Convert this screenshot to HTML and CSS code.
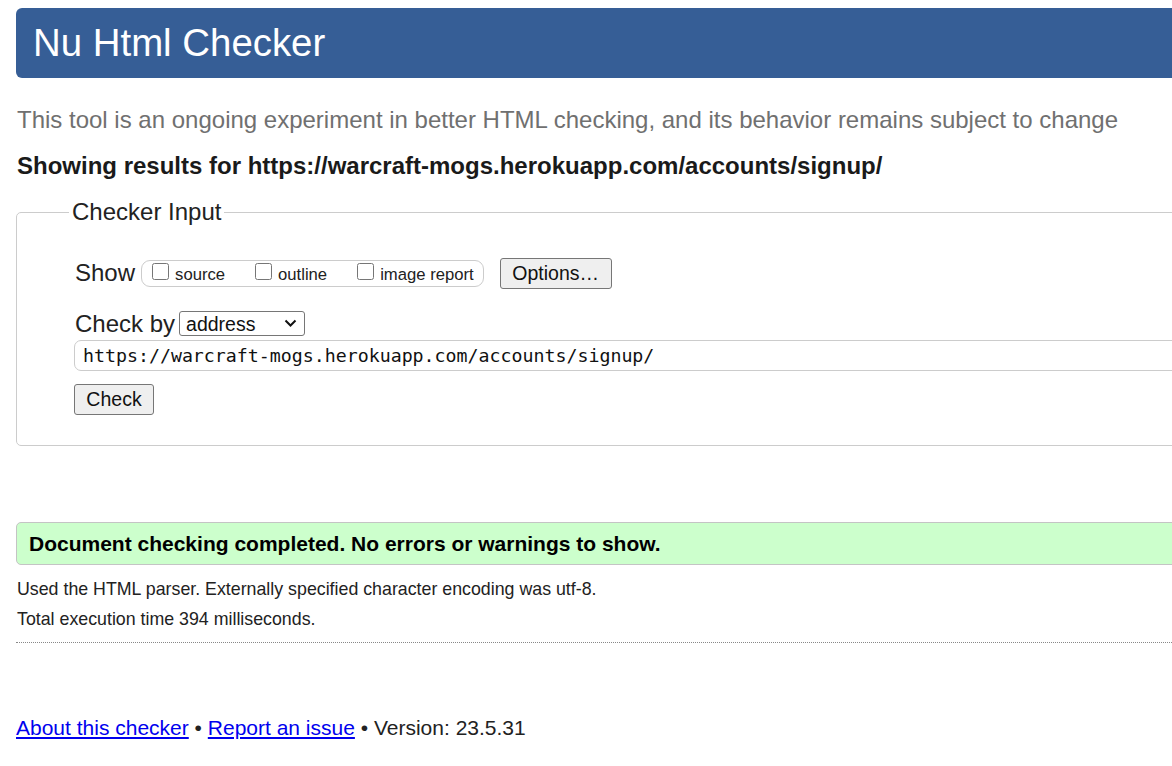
FILE: index.html
```html
<!DOCTYPE html>
<html lang="en">
<head>
<meta charset="utf-8">
<title>Nu Html Checker</title>
<link rel="stylesheet" href="styles.css">
</head>
<body>
<div class="page">
  <header class="banner"><h1>Nu Html Checker</h1></header>
  <p class="tagline">This tool is an ongoing experiment in better HTML checking, and its behavior remains subject to change</p>
  <p class="showing">Showing results for https://warcraft-mogs.herokuapp.com/accounts/signup/</p>
  <form class="checker-form">
    <fieldset class="input-box">
      <legend>Checker Input</legend>
      <div class="row show-row">
        <span class="lbl">Show</span>
        <span class="pill">
          <label class="opt"><input type="checkbox">source</label>
          <label class="opt"><input type="checkbox">outline</label>
          <label class="opt"><input type="checkbox">image report</label>
        </span>
        <button type="button" class="btn options">Options…</button>
      </div>
      <div class="row checkby-row">
        <span class="lbl">Check by</span>
        <span class="select-wrap">
          <select class="sel"><option>address</option></select>
          <svg class="chev" width="13" height="8" viewBox="0 0 13 8"><polyline points="1.5,1.5 6.5,6.5 11.5,1.5" fill="none" stroke="#111" stroke-width="2"/></svg>
        </span>
      </div>
      <input class="url" type="text" value="https://warcraft-mogs.herokuapp.com/accounts/signup/">
      <button type="button" class="btn check">Check</button>
    </fieldset>
  </form>
  <div class="success"><p>Document checking completed. No errors or warnings to show.</p></div>
  <p class="details first">Used the HTML parser. Externally specified character encoding was utf-8.</p>
  <p class="details">Total execution time 394 milliseconds.</p>
  <hr class="dotted">
  <p class="footer"><a href="#">About this checker</a> • <a href="#">Report an issue</a> • Version: 23.5.31</p>
</div>
</body>
</html>
```
FILE: styles.css
```css
html { overflow: hidden; }
body {
  margin: 0;
  font-family: "Liberation Sans", Arial, sans-serif;
  color: #222;
  background: #fff;
}
.page {
  width: 1400px;
  padding: 8px 0 0 16px;
}
.banner {
  background: #365e96;
  border-radius: 6px;
  height: 70px;
  padding-left: 17px;
}
.banner h1 {
  margin: 0;
  font-weight: normal;
  font-size: 38.4px;
  line-height: 70px;
  color: #fff;
}
.tagline {
  margin: 28px 0 0 1px;
  font-size: 24px;
  line-height: 28px;
  color: #707070;
}
.showing {
  margin: 18px 0 0 1px;
  font-size: 24px;
  line-height: 28px;
  font-weight: bold;
  color: #1a1a1a;
}
.checker-form { margin: 18px 0 0 0; }
.input-box {
  margin: 0;
  border: 1px solid #ccc;
  border-radius: 5px;
  padding: 0 0 30px 57px;
  min-width: 0;
}
.input-box legend {
  margin-left: -5px;
  padding: 0 3px;
  font-size: 24px;
  line-height: 28px;
  color: #222;
}
.row {
  display: flex;
  align-items: center;
}
.show-row {
  height: 32px;
  margin-top: 31px;
}
.lbl {
  font-size: 24px;
  color: #222;
  margin-left: 1px;
}
.pill {
  box-sizing: border-box;
  margin-left: 6px;
  height: 27px;
  border: 1px solid #ccc;
  border-radius: 9px;
  padding: 0 9px 0 10px;
  display: flex;
  align-items: center;
  gap: 30px;
}
.opt {
  display: inline-flex;
  align-items: baseline;
  font-size: 16.67px;
  color: #222;
  position: relative;
  top: 1px;
}
.opt input {
  width: 17px;
  height: 17px;
  margin: 0 6px 0 0;
}
.btn {
  box-sizing: border-box;
  height: 31px;
  background: #efefef;
  border: 1px solid #767676;
  border-radius: 3px;
  font-family: "Liberation Sans", Arial, sans-serif;
  font-size: 19.5px;
  color: #111;
  padding: 0;
}
.options {
  margin-left: 16px;
  width: 112px;
}
.checkby-row {
  height: 25px;
  margin-top: 22px;
}
.select-wrap {
  position: relative;
  margin-left: 4px;
  display: inline-block;
  height: 25px;
}
.sel {
  box-sizing: border-box;
  appearance: none;
  -webkit-appearance: none;
  width: 126px;
  height: 25px;
  border: 1px solid #767676;
  border-radius: 3px;
  background: #fff;
  font-family: "Liberation Sans", Arial, sans-serif;
  font-size: 19.5px;
  color: #111;
  padding: 0 0 0 6px;
  margin: 0;
}
.chev {
  position: absolute;
  right: 8px;
  top: 8px;
  pointer-events: none;
}
.url {
  display: block;
  box-sizing: border-box;
  margin: 4px 0 0 0;
  width: 1300px;
  height: 31px;
  border: 1px solid #ccc;
  border-radius: 7px;
  padding: 0 8px;
  font-family: "DejaVu Sans Mono", "Liberation Mono", monospace;
  font-size: 18.25px;
  color: #111;
}
.check {
  display: block;
  margin-top: 13px;
  width: 80px;
}
.success {
  box-sizing: border-box;
  margin-top: 76px;
  height: 43px;
  border: 1px solid #c4c4c4;
  border-radius: 5px;
  background: #ccffcc;
  padding-left: 12px;
}
.success p {
  margin: 0;
  font-size: 21px;
  line-height: 42px;
  font-weight: bold;
  color: #000;
}
.details {
  margin: 10px 0 0 1px;
  font-size: 17.8px;
  line-height: 20px;
  color: #222;
}
.details.first { margin-top: 14px; }
.dotted {
  margin: 13px 0 0 0;
  border: 0;
  border-top: 1px dotted #888;
  height: 0;
}
.footer {
  margin: 73px 0 0 0;
  font-size: 21px;
  line-height: 24px;
  color: #222;
}
.footer a { color: #0000ee; }
```
